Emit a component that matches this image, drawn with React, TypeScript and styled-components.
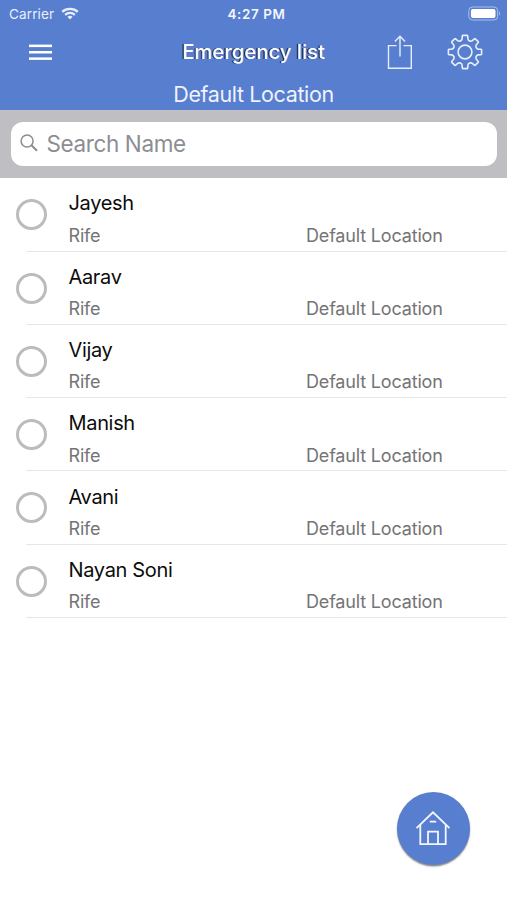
import React from 'react';
import styled, { createGlobalStyle } from 'styled-components';

const GlobalStyle = createGlobalStyle`
  * { box-sizing: border-box; }
  body { margin: 0; background: #fff; font-family: Inter, "Liberation Sans", sans-serif; }
`;

const Screen = styled.div`
  position: relative;
  width: 507px;
  height: 900px;
  overflow: hidden;
  background: #fff;
`;

const Header = styled.header`
  height: 109.5px;
  background: #587ecf;
  color: #fff;
`;

const StatusBar = styled.div`
  display: grid;
  grid-template-columns: 1fr auto 1fr;
  align-items: center;
  height: 27px;
  padding: 0 6px 0 9px;
`;

const Carrier = styled.div`
  display: flex;
  align-items: center;
  gap: 6.5px;
  color: #e8eefb;
  font-size: 13.6px;
  letter-spacing: 0.1px;
`;

const Clock = styled.div`
  font-size: 13.4px;
  font-weight: 600;
  letter-spacing: 0.6px;
  padding-left: 3px;
  color: #f3f6fd;
`;

const BatterySlot = styled.div`
  display: flex;
  justify-content: flex-end;
`;

const NavBar = styled.div`
  display: grid;
  grid-template-columns: 170px 167px 1fr;
  align-items: center;
  height: 50px;
`;

const IconButton = styled.button`
  display: flex;
  padding: 0;
  border: 0;
  background: none;
  color: inherit;
`;

const MenuButton = styled(IconButton)`
  margin-left: 29px;
`;

const Title = styled.h1`
  margin: 0;
  text-align: center;
  white-space: nowrap;
  font-size: 20.3px;
  font-weight: 500;
  line-height: 26px;
  letter-spacing: 0;
  text-shadow: -1.2px 0.3px 0.4px #14203c;
`;

const Actions = styled.div`
  display: flex;
  align-items: center;
  justify-content: space-between;
  padding: 0 23.7px 0 50px;
`;

const Subtitle = styled.div`
  text-align: center;
  font-size: 21.5px;
  line-height: 34px;
  color: #eef3fd;
  letter-spacing: -0.38px;
`;

const SearchBar = styled.div`
  height: 68.8px;
  padding: 12.5px 10px 12px 11px;
  background: #bfbec3;
`;

const SearchField = styled.div`
  display: flex;
  align-items: center;
  gap: 8.5px;
  height: 44px;
  padding: 0 0 1.5px 9px;
  border-radius: 12px;
  background: #fff;
  color: #8d8d92;
  font-size: 22.5px;
  letter-spacing: -0.38px;
`;

const List = styled.ul`
  margin: 0;
  padding: 0;
  list-style: none;
`;

const Row = styled.li`
  display: grid;
  grid-template-columns: 43px 1fr;
  height: 73.3px;
  margin-left: 25.5px;
  border-bottom: 1px solid #e6e6e8;
`;

const Radio = styled.span`
  width: 31px;
  height: 31px;
  margin: 21px 0 0 -9.5px;
  border: 3px solid #bcbcbe;
  border-radius: 50%;
`;

const Details = styled.div`
  padding-top: 12.2px;
`;

const Name = styled.div`
  font-size: 20px;
  line-height: 26px;
  letter-spacing: -0.33px;
  color: #0c0c0c;
`;

const Meta = styled.div`
  display: grid;
  grid-template-columns: 237.5px 1fr;
  padding-top: 8.3px;
  font-size: 18px;
  line-height: 22px;
  letter-spacing: -0.17px;
  color: #747476;
`;

const HomeButton = styled.button`
  position: absolute;
  left: 397px;
  top: 792px;
  display: flex;
  align-items: center;
  justify-content: center;
  width: 73px;
  height: 73px;
  padding: 0 1px 1px 0;
  border: 0;
  border-radius: 50%;
  background: #587ecf;
  color: #f4f7fe;
  box-shadow: 0 1.5px 1.5px rgba(60, 60, 60, 0.6);
`;

const WifiIcon = () => (
  <svg width="18" height="13" viewBox="0 0 18 13" fill="none" stroke="currentColor" strokeWidth="2.3">
    <path d="M1.2 4.8C5.5.8 12.5.8 16.8 4.8" />
    <path d="M4.1 7.8C6.9 5.3 11.1 5.3 13.9 7.8" />
    <path d="M9 12.4 6.4 9.8Q9 7.8 11.6 9.8Z" fill="currentColor" stroke="none" />
  </svg>
);

const BatteryIcon = () => (
  <svg width="33" height="15" viewBox="0 0 33 15" fill="none">
    <rect x="0.8" y="1" width="28.8" height="13" rx="3.6" stroke="#a9bfeb" strokeWidth="1" />
    <rect x="2.9" y="3" width="24.6" height="9" rx="2" fill="#fff" />
    <path d="M31 5.2Q33 7.5 31 9.8Z" fill="#a9bfeb" />
  </svg>
);

const MenuIcon = () => (
  <svg width="23" height="17" viewBox="0 0 23 17" fill="currentColor">
    <rect y="0.6" width="23" height="2.5" />
    <rect y="7" width="23" height="2.5" />
    <rect y="13.4" width="23" height="2.5" />
  </svg>
);

const ShareIcon = () => (
  <svg width="26" height="36" viewBox="0 0 26 36" fill="none" stroke="#e6eefc" strokeWidth="1.4">
    <path d="M9.5 11.6H1.5V34.2H24.3V11.6H16.5" />
    <path d="M13 22.5V2.5M7.9 7.4 13 2.2 18.1 7.4" />
  </svg>
);

const gearPath = Array.from({ length: 8 }, (_, i) => {
  const at = (x: number, y: number) => {
    const a = (i * Math.PI) / 4;
    const px = 18 + x * Math.cos(a) - y * Math.sin(a);
    const py = 18 + x * Math.sin(a) + y * Math.cos(a);
    return `${px.toFixed(2)} ${py.toFixed(2)}`;
  };
  return [
    `${i ? 'L' : 'M'}${at(-2.9, -13.2)}`,
    `L${at(-2.7, -16)}`,
    `Q${at(-2.6, -16.6)} ${at(-2, -16.6)}`,
    `L${at(2, -16.6)}`,
    `Q${at(2.6, -16.6)} ${at(2.7, -16)}`,
    `L${at(2.9, -13.2)}`,
    `Q${at(3.1, -11.7)} ${at(4.6, -11.1)}`,
    `Q${at(6.1, -10.5)} ${at(7.28, -11.38)}`,
  ].join('');
}).join('') + 'Z';

const GearIcon = () => (
  <svg width="36" height="36" viewBox="0 0 36 36" fill="none" stroke="#e6eefc" strokeWidth="1.6" strokeLinejoin="round">
    <path d={gearPath} />
    <circle cx="18" cy="18" r="6.9" />
  </svg>
);

const SearchIcon = () => (
  <svg width="18" height="18" viewBox="0 0 18 18" fill="none" stroke="currentColor" strokeWidth="1.5">
    <circle cx="7.1" cy="7" r="6" />
    <path d="M11.4 11.2 17 16.8" strokeWidth="2" />
  </svg>
);

const HomeIcon = () => (
  <svg width="36" height="36" viewBox="0 0 36 36" fill="none" stroke="currentColor" strokeWidth="1.8">
    <path d="M1.5 18.2 18 2.3 34.5 18.2" />
    <path d="M5.3 15V34.2H30.7V15" />
    <path d="M13 34V21.7H23V34M14.8 11.7H21.2" />
  </svg>
);

const people = ['Jayesh', 'Aarav', 'Vijay', 'Manish', 'Avani', 'Nayan Soni'];

export default function App() {
  return (
    <Screen>
      <GlobalStyle />
      <Header>
        <StatusBar>
          <Carrier>Carrier<WifiIcon /></Carrier>
          <Clock>4:27 PM</Clock>
          <BatterySlot><BatteryIcon /></BatterySlot>
        </StatusBar>
        <NavBar>
          <MenuButton aria-label="Menu"><MenuIcon /></MenuButton>
          <Title>Emergency list</Title>
          <Actions>
            <IconButton aria-label="Share"><ShareIcon /></IconButton>
            <IconButton aria-label="Settings"><GearIcon /></IconButton>
          </Actions>
        </NavBar>
        <Subtitle>Default Location</Subtitle>
      </Header>
      <SearchBar>
        <SearchField><SearchIcon />Search Name</SearchField>
      </SearchBar>
      <List>
        {people.map((name) => (
          <Row key={name}>
            <Radio />
            <Details>
              <Name>{name}</Name>
              <Meta><span>Rife</span><span>Default Location</span></Meta>
            </Details>
          </Row>
        ))}
      </List>
      <HomeButton aria-label="Home"><HomeIcon /></HomeButton>
    </Screen>
  );
}
